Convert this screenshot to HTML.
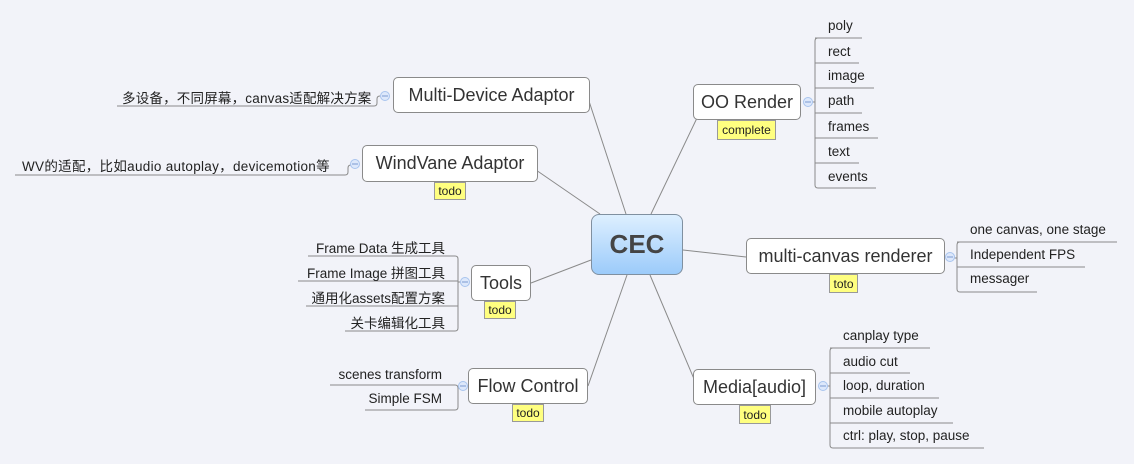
<!DOCTYPE html>
<html><head><meta charset="utf-8"><style>
body{margin:0;width:1134px;height:464px;background:#f2f3f9;position:relative;overflow:hidden;font-family:"Liberation Sans","Noto Sans CJK SC",sans-serif;color:#222}
.t{position:absolute;background:#fff;border:1px solid #8a8a8a;border-radius:5px;font-size:18px;box-sizing:border-box;display:flex;align-items:center;justify-content:center;color:#333}
.s{position:absolute;font-size:13.5px;white-space:nowrap;color:#222}
.r{text-align:right}
.l{position:absolute;background:#ffff80;border:1px solid #999;font-size:12px;box-sizing:border-box;display:flex;align-items:center;justify-content:center;color:#222}
.c{position:absolute;left:591px;top:214px;width:92px;height:61px;box-sizing:border-box;border:1px solid #8090a0;border-radius:8px;background:linear-gradient(#ddefff,#9ccbfa);display:flex;align-items:center;justify-content:center;font-size:26px;font-weight:bold;color:#444}
svg{position:absolute;left:0;top:0}
</style></head><body>
<svg width="1134" height="464" fill="none" stroke="#8a8a8a" stroke-width="1">
<path d="M588 98L626 214M536 170L600 214M697 118L651 214M683 250L746 257M531 283L591 260M588 386L627 275M697 386L650 275"/>
<path d="M815 38H862M818 38Q815 38 815 41V185Q815 188 818 188H876M815 63H859M815 88H874M815 113H862M815 138H878M815 163H859M815 102H812"/>
<path d="M957 242H1117M960 242Q957 242 957 245V289Q957 292 960 292H1037M957 267H1085M957 258H953"/>
<path d="M830 348H930M833 348Q830 348 830 351V445Q830 448 833 448H984M830 373H910M830 398H939M830 423H953M830 386H826"/>
<path d="M308 256H455Q458 256 458 259V328Q458 331 455 331H345M298 281H458M306 306H458M458 282H462"/>
<path d="M330 385H455Q458 385 458 388V407Q458 410 455 410H365M458 387H462"/>
<path d="M117 106H374Q377 106 377 103V99Q377 96 380 96"/>
<path d="M15 175H345Q348 175 348 172V168Q348 165 351 165"/>
<g fill="#dde8fb" stroke="#a8c4ee"><circle cx="385" cy="96" r="4.5"/><circle cx="355" cy="164" r="4.5"/><circle cx="465" cy="282" r="4.5"/><circle cx="463" cy="386" r="4.5"/><circle cx="808" cy="102" r="4.5"/><circle cx="950" cy="257" r="4.5"/><circle cx="823" cy="386" r="4.5"/></g>
<g stroke="#7a9ad0"><path d="M382 96h6M352 164h6M462 282h6M460 386h6M805 102h6M947 257h6M820 386h6"/></g>
</svg>
<div class="c">CEC</div>
<div class="t" style="left:393px;top:77px;width:197px;height:36px">Multi-Device Adaptor</div>
<div class="t" style="left:362px;top:145px;width:176px;height:37px">WindVane Adaptor</div>
<div class="l" style="left:434px;top:182px;width:32px;height:18px">todo</div>
<div class="t" style="left:471px;top:265px;width:60px;height:36px">Tools</div>
<div class="l" style="left:484px;top:301px;width:32px;height:18px">todo</div>
<div class="t" style="left:468px;top:368px;width:120px;height:36px">Flow Control</div>
<div class="l" style="left:512px;top:404px;width:32px;height:18px">todo</div>
<div class="t" style="left:693px;top:84px;width:108px;height:36px">OO Render</div>
<div class="l" style="left:717px;top:120px;width:59px;height:20px">complete</div>
<div class="t" style="left:746px;top:238px;width:199px;height:36px">multi-canvas renderer</div>
<div class="l" style="left:829px;top:274px;width:29px;height:19px">toto</div>
<div class="t" style="left:693px;top:369px;width:123px;height:36px">Media[audio]</div>
<div class="l" style="left:739px;top:405px;width:32px;height:19px">todo</div>

<div class="s" style="left:828px;top:18px">poly</div>
<div class="s" style="left:828px;top:44px">rect</div>
<div class="s" style="left:828px;top:68px">image</div>
<div class="s" style="left:828px;top:93px">path</div>
<div class="s" style="left:828px;top:119px">frames</div>
<div class="s" style="left:828px;top:144px">text</div>
<div class="s" style="left:828px;top:169px">events</div>

<div class="s" style="left:970px;top:222px">one canvas, one stage</div>
<div class="s" style="left:970px;top:247px">Independent FPS</div>
<div class="s" style="left:970px;top:271px">messager</div>

<div class="s" style="left:843px;top:328px">canplay type</div>
<div class="s" style="left:843px;top:354px">audio cut</div>
<div class="s" style="left:843px;top:378px">loop, duration</div>
<div class="s" style="left:843px;top:403px">mobile autoplay</div>
<div class="s" style="left:843px;top:428px">ctrl: play, stop, pause</div>

<div class="s r" style="right:689px;top:237px">Frame Data 生成工具</div>
<div class="s r" style="right:689px;top:262px">Frame Image 拼图工具</div>
<div class="s r" style="right:689px;top:287px">通用化assets配置方案</div>
<div class="s r" style="right:689px;top:312px">关卡编辑化工具</div>

<div class="s r" style="right:692px;top:367px">scenes transform</div>
<div class="s r" style="right:692px;top:391px">Simple FSM</div>

<div class="s" style="left:122px;top:87px;letter-spacing:0.2px">多设备，不同屏幕，canvas适配解决方案</div>
<div class="s" style="left:22px;top:155px;letter-spacing:0.3px">WV的适配，比如audio autoplay，devicemotion等</div>
</body></html>
